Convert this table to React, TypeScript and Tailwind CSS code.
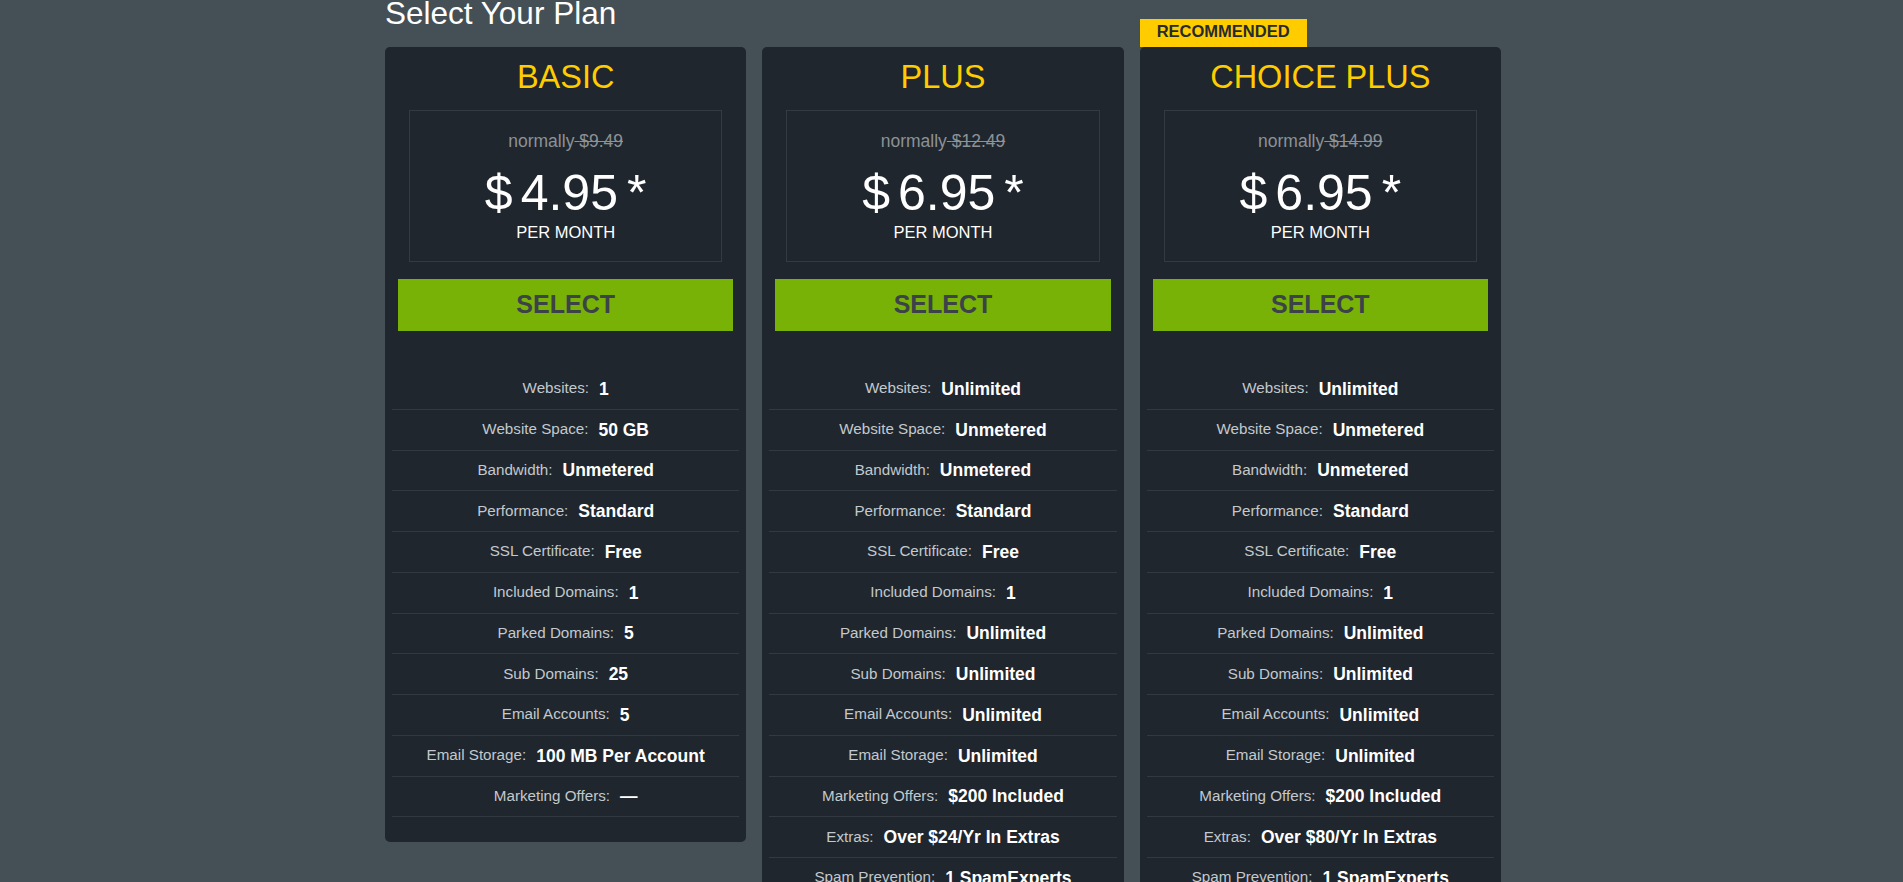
import React from "react";

type Feature = [string, string];

type Plan = {
  name: string;
  normally: string;
  price: string;
  recommended?: boolean;
  features: Feature[];
};

const plans: Plan[] = [
  {
    name: "BASIC",
    normally: "$9.49",
    price: "4.95",
    features: [
      ["Websites:", "1"],
      ["Website Space:", "50 GB"],
      ["Bandwidth:", "Unmetered"],
      ["Performance:", "Standard"],
      ["SSL Certificate:", "Free"],
      ["Included Domains:", "1"],
      ["Parked Domains:", "5"],
      ["Sub Domains:", "25"],
      ["Email Accounts:", "5"],
      ["Email Storage:", "100 MB Per Account"],
      ["Marketing Offers:", "—"],
    ],
  },
  {
    name: "PLUS",
    normally: "$12.49",
    price: "6.95",
    features: [
      ["Websites:", "Unlimited"],
      ["Website Space:", "Unmetered"],
      ["Bandwidth:", "Unmetered"],
      ["Performance:", "Standard"],
      ["SSL Certificate:", "Free"],
      ["Included Domains:", "1"],
      ["Parked Domains:", "Unlimited"],
      ["Sub Domains:", "Unlimited"],
      ["Email Accounts:", "Unlimited"],
      ["Email Storage:", "Unlimited"],
      ["Marketing Offers:", "$200 Included"],
      ["Extras:", "Over $24/Yr In Extras"],
      ["Spam Prevention:", "1 SpamExperts"],
    ],
  },
  {
    name: "CHOICE PLUS",
    normally: "$14.99",
    price: "6.95",
    recommended: true,
    features: [
      ["Websites:", "Unlimited"],
      ["Website Space:", "Unmetered"],
      ["Bandwidth:", "Unmetered"],
      ["Performance:", "Standard"],
      ["SSL Certificate:", "Free"],
      ["Included Domains:", "1"],
      ["Parked Domains:", "Unlimited"],
      ["Sub Domains:", "Unlimited"],
      ["Email Accounts:", "Unlimited"],
      ["Email Storage:", "Unlimited"],
      ["Marketing Offers:", "$200 Included"],
      ["Extras:", "Over $80/Yr In Extras"],
      ["Spam Prevention:", "1 SpamExperts"],
    ],
  },
];

function PlanCard({ plan }: { plan: Plan }) {
  return (
    <div className="relative flex flex-col self-start rounded-[5px] bg-[#1f262d] pt-[14px] pb-[25px]">
      {plan.recommended && (
        <div className="absolute left-0 top-[-28px] h-[28px] bg-[#ffcc00] px-[17px] text-[16.5px] font-bold leading-[24px] text-[#262b30]">
          RECOMMENDED
        </div>
      )}
      <div className="text-center text-[32.5px] leading-[32px] text-[#ffcc00]">{plan.name}</div>
      <div className="mx-[24px] mt-[17px] border border-[#343a3f] pt-[19.5px] pb-[20.5px] text-center">
        <div className="text-[17.5px] leading-[20px] text-[#8c9297]">
          normally<s> {plan.normally}</s>
        </div>
        <div className="mt-[18px] flex justify-center text-[50px] leading-[49px] text-white">
          <span>$</span>
          <span className="ml-[8px]">{plan.price}</span>
          <span className="ml-[9px]">*</span>
        </div>
        <div className="mt-[5px] text-[16.5px] leading-[18px] text-white">PER MONTH</div>
      </div>
      <div className="mx-[13px] mt-[17px] flex h-[52px] items-center justify-center bg-[#78b207] text-[25px] font-bold text-[#3b4248]">
        SELECT
      </div>
      <div className="mt-[38px] px-[7px]">
        {plan.features.map(([label, value]) => (
          <div
            key={label}
            className="flex h-[40.75px] items-center justify-center gap-[10px] border-b border-[#33393e]"
          >
            <span className="text-[15.2px] text-[#c3c9ce]">{label}</span>
            <span className="text-[17.5px] font-bold text-white">{value}</span>
          </div>
        ))}
      </div>
    </div>
  );
}

export default function App() {
  return (
    <div
      className="min-h-[882px] w-full bg-[#454f56]"
      style={{ fontFamily: '"Liberation Sans", Arial, sans-serif' }}
    >
      <div className="ml-[385px] w-[1116px] pb-[40px]">
        <h1 className="text-[31.5px] leading-[27px] text-white">Select Your Plan</h1>
        <div className="mt-[20px] grid grid-cols-3 items-start gap-[16px]">
          {plans.map((p) => (
            <PlanCard key={p.name} plan={p} />
          ))}
        </div>
      </div>
    </div>
  );
}
